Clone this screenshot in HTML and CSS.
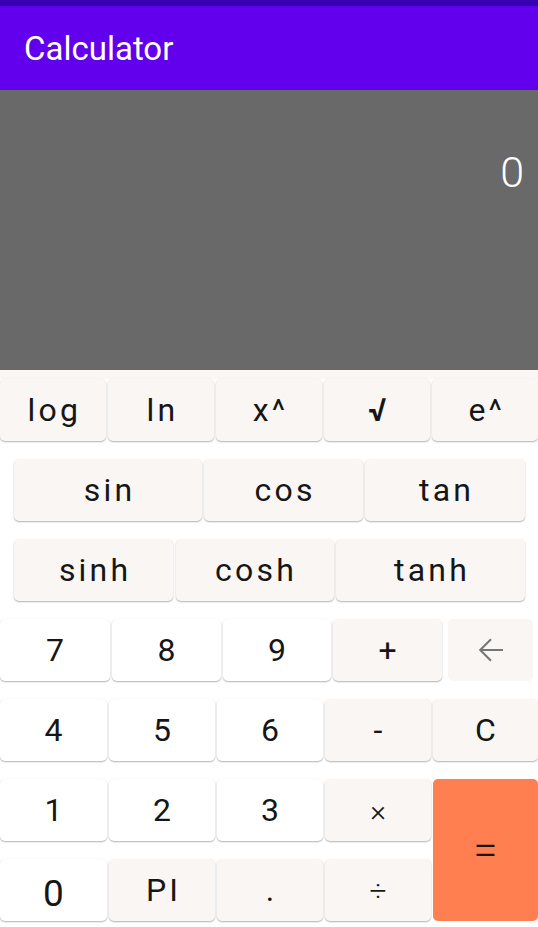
FILE: index.html
```html
<!DOCTYPE html>
<html>
<head>
<meta charset="utf-8">
<link rel="stylesheet" href="styles.css">
</head>
<body>
<div class="status"></div>
<header class="appbar"><h1 class="title">Calculator</h1></header>
<div class="display"><span class="result">0</span></div>
<div class="keys">
  <div class="row r1">
    <div class="btn fn">log</div>
    <div class="btn fn">ln</div>
    <div class="btn fn">x^</div>
    <div class="btn fn sqrt">√</div>
    <div class="btn fn">e^</div>
  </div>
  <div class="row r2">
    <div class="btn fn">sin</div>
    <div class="btn fn">cos</div>
    <div class="btn fn">tan</div>
  </div>
  <div class="row r3">
    <div class="btn fn">sinh</div>
    <div class="btn fn">cosh</div>
    <div class="btn fn">tanh</div>
  </div>
  <div class="row r4">
    <div class="btn num">7</div>
    <div class="btn num">8</div>
    <div class="btn num">9</div>
    <div class="btn fn">+</div>
    <div class="btn flat back">
      <svg width="36" height="36" viewBox="0 0 24 24"><path d="M20 12H4.8M12 4.8L4.8 12L12 19.2" fill="none" stroke="#767676" stroke-width="1.35"/></svg>
    </div>
  </div>
  <div class="pad">
    <div class="btn num">4</div>
    <div class="btn num">5</div>
    <div class="btn num">6</div>
    <div class="btn fn">-</div>
    <div class="btn fn">C</div>
    <div class="btn num">1</div>
    <div class="btn num">2</div>
    <div class="btn num">3</div>
    <div class="btn fn op">×</div>
    <div class="btn eq">=</div>
    <div class="btn num zero">0</div>
    <div class="btn fn">PI</div>
    <div class="btn fn">.</div>
    <div class="btn fn op">÷</div>
  </div>
</div>
</body>
</html>
```
FILE: styles.css
```css
* { box-sizing: border-box; }
html, body {
  margin: 0;
  padding: 0;
  background: #ffffff;
  font-family: Roboto, "Liberation Sans", sans-serif;
  width: 538px;
  height: 927px;
  overflow: hidden;
}
.status {
  height: 6px;
  background: #3700b3;
}
.appbar {
  height: 84px;
  background: #6200ee;
  display: flex;
  align-items: center;
  padding-left: 24px;
}
.title {
  margin: 0;
  color: #ffffff;
  font-weight: 400;
  font-size: 33px;
  letter-spacing: 0;
}
.display {
  height: 289px;
  background: #696969;
  border-bottom: 9px solid #f9f6f4;
  text-align: right;
  padding: 57px 14px 0 0;
}
.result {
  color: #ffffff;
  font-size: 43px;
  font-weight: 300;
}
.row {
  height: 80px;
  display: grid;
  column-gap: 2px;
  padding: 9px 0;
}
.r1 {
  height: 71px;
  padding-top: 0;
  grid-template-columns: repeat(5, 1fr);
  column-gap: 2.5px;
}
.r2 {
  padding: 9px 13px 9px 14px;
  grid-template-columns: 188px 159px 1fr;
}
.r3 {
  padding: 9px 13px 9px 14px;
  grid-template-columns: 159px 158px 1fr;
  column-gap: 2.5px;
}
.r4 {
  padding-right: 5px;
  grid-template-columns: 110px 109px 108px 109px 1fr;
}
.pad {
  display: grid;
  grid-template-columns: 107px 106px 106px 106px 1fr;
  grid-template-rows: 80px 80px 80px;
  column-gap: 2px;
}
.pad .btn { margin: 9px 0; }
.btn {
  display: flex;
  align-items: center;
  justify-content: center;
  border-radius: 5px;
  font-size: 32px;
  font-weight: 400;
  letter-spacing: 0.1em;
  text-indent: 0.1em;
  color: #161616;
  box-shadow: 0 1px 2px rgba(0,0,0,0.22), 0 1px 1px rgba(0,0,0,0.1);
}
.fn { background: #f9f6f4; }
.num { background: #ffffff; }
.flat {
  background: #f9f6f4;
  box-shadow: none;
}
.back {
  width: 85px;
  justify-self: end;
}
.sqrt { font-weight: 700; }
.zero {
  font-size: 37px;
  padding-top: 6px;
}
.op { font-size: 30px; font-weight: 300; }
.eq {
  grid-column: 5;
  grid-row: 2 / span 2;
  background: #ff7f50;
  box-shadow: none;
  font-size: 44px;
  font-weight: 300;
}
```
